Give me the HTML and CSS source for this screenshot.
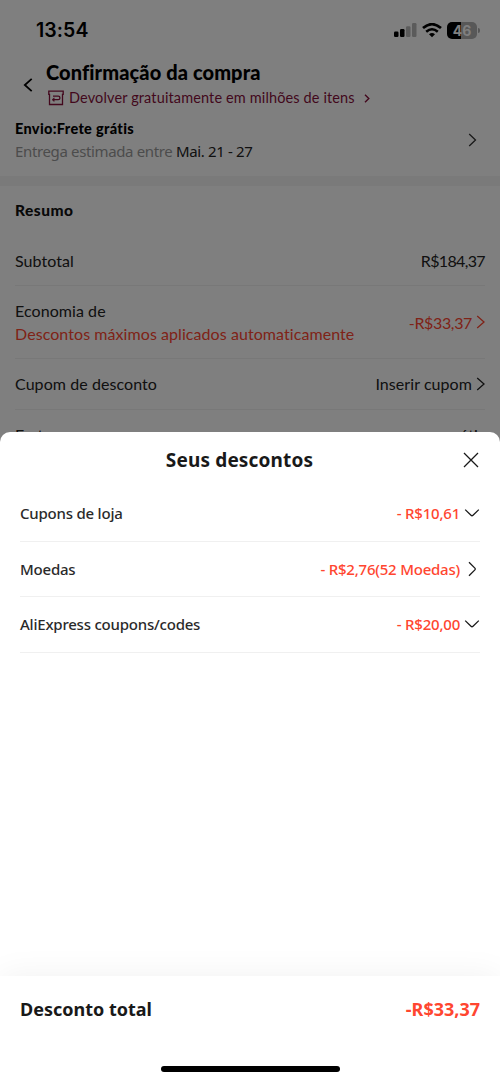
FILE: index.html
```html
<!DOCTYPE html>
<html lang="pt-BR">
<head>
<meta charset="utf-8">
<title>Confirmação da compra</title>
<link rel="stylesheet" href="styles.css">
</head>
<body>
<div class="screen">
  <div class="status">
    <span class="time">13:54</span>
    <div class="indicators">
      <svg class="signal" width="24" height="14" viewBox="0 0 24 14"><rect x="0" y="8.5" width="4.5" height="5.5" rx="1.2"/><rect x="6" y="6" width="4.5" height="8" rx="1.2"/><g opacity=".28"><rect x="12" y="3.2" width="4.5" height="10.8" rx="1.2"/><rect x="18" y="0" width="4.5" height="14" rx="1.2"/></g></svg>
      <svg class="wifi" width="20" height="15" viewBox="0 0 20 15"><path d="M1 5.1Q10-2.7 19 5.1" fill="none" stroke="#000" stroke-width="2.7"/><path d="M4.2 8.7Q10 3.8 15.8 8.7" fill="none" stroke="#000" stroke-width="2.6"/><path d="M10 14.2 7 11.2Q10 8.9 13 11.2Z"/></svg>
      <div class="battery">46</div><i class="nub"></i>
    </div>
  </div>
  <header class="header">
    <svg class="back" width="10" height="16" viewBox="0 0 10 16" fill="none" stroke="#000" stroke-width="1.8"><path d="M8.7 1.8 1.8 8l6.9 6.2"/></svg>
    <div>
      <h1 class="title">Confirmação da compra</h1>
      <div class="returns">
        <svg width="16" height="16" viewBox="0 0 16 16" fill="none" stroke="currentColor" stroke-width="1.3"><path d="M.8 1.2h14.4v3.2h-.7v10.1h-13V4.4H.8Z"/><path d="M5 6.2h5.2a1.7 1.7 0 0 1 0 3.5H5"/><path d="M6.2 7.8 4 9.7l2.2 1.8Z" fill="currentColor" stroke-width=".5"/></svg>
        <span class="returns-text">Devolver gratuitamente em milhões de itens</span>
        <svg class="mini" width="6" height="9" viewBox="0 0 6 9" fill="none" stroke="currentColor" stroke-width="1.4"><path d="M1 .8 4.8 4.5 1 8.2"/></svg>
      </div>
    </div>
  </header>
  <section class="shipping">
    <div>
      <div class="ship-method">Envio:Frete grátis</div>
      <div class="eta">Entrega estimada entre <span class="dates">Mai. 21 - 27</span></div>
    </div>
    <svg class="ship-arrow" width="9" height="14" viewBox="0 0 9 14" fill="none" stroke="#333" stroke-width="1.3"><path d="M1.2 1 7.5 7l-6.3 6"/></svg>
  </section>
  <section class="summary">
    <h2 class="summary-title">Resumo</h2>
    <div class="line subtotal"><span>Subtotal</span><span class="price">R$184,37</span></div>
    <div class="line savings"><div><div>Economia de</div><div class="red">Descontos máximos aplicados automaticamente</div></div>
      <span class="value red"><span class="price-off">-R$33,37</span><svg width="9" height="14" viewBox="0 0 9 14" fill="none" stroke="currentColor" stroke-width="1.3"><path d="M1.2 1 8 7l-6.8 6"/></svg></span></div>
    <div class="line coupon"><span>Cupom de desconto</span>
      <span class="value"><span>Inserir cupom</span><svg width="9" height="14" viewBox="0 0 9 14" fill="none" stroke="currentColor" stroke-width="1.3"><path d="M1.2 1 8 7l-6.8 6"/></svg></span></div>
    <div class="line freight"><span>Frete</span><span>grátis</span></div>
  </section>
  <div class="backdrop"></div>
  <div class="sheet">
    <div class="sheet-head">
      <h2 class="sheet-title">Seus descontos</h2>
      <svg class="close" width="16" height="16" viewBox="0 0 16 16" fill="none" stroke="#191919" stroke-width="1.3"><path d="m1 1 14 14M15 1 1 15"/></svg>
    </div>
    <div class="discounts">
      <div class="discount"><span>Cupons de loja</span><span class="amount">- R$10,61<svg class="chev" width="16" height="14" viewBox="0 0 16 14" fill="none" stroke="#191919" stroke-width="1.3"><path d="M1.2 3.6 7 9.2q1 1 2 0l5.8-5.6"/></svg></span></div>
      <div class="discount"><span>Moedas</span><span class="amount">- R$2,76(52 Moedas)<svg class="chev" width="16" height="16" viewBox="0 0 16 16" fill="none" stroke="#191919" stroke-width="1.3"><path d="m5 1.2 5.9 5.9q.9.9 0 1.8L5 14.8"/></svg></span></div>
      <div class="discount"><span>AliExpress coupons/codes</span><span class="amount">- R$20,00<svg class="chev" width="16" height="14" viewBox="0 0 16 14" fill="none" stroke="#191919" stroke-width="1.3"><path d="M1.2 3.6 7 9.2q1 1 2 0l5.8-5.6"/></svg></span></div>
    </div>
    <footer class="total">
      <div class="total-row"><span>Desconto total</span><span class="total-value">-R$33,37</span></div>
      <div class="home"></div>
    </footer>
  </div>
</div>
</body>
</html>
```
FILE: styles.css
```css
* { box-sizing: border-box; }
body { margin: 0; }
h1, h2 { margin: 0; }
svg { display: block; flex: none; }
.screen { position: relative; width: 500px; height: 1082px; overflow: hidden; background: #fff; color: #222; font: 16px/22px Lato, sans-serif; font-variant-ligatures: none; letter-spacing: .07px; white-space: nowrap; }
.status { display: flex; justify-content: space-between; height: 60px; padding: 19px 20px 0 36px; color: #000; }
.time { font: 600 19.5px/22px Inter, sans-serif; }
.indicators { display: flex; height: 22px; align-items: center; }
.wifi { margin-left: 4px; }
.battery { width: 30px; height: 17px; margin-left: 5px; border-radius: 5px; background: linear-gradient(90deg, #000 47%, #b0b0b0 47%); color: #fff; font: 700 14px/17px Inter, sans-serif; text-align: center; }
.nub { width: 2px; height: 5px; margin-left: 1px; border-radius: 0 2px 2px 0; background: #aaa; }
.header { display: flex; height: 57px; padding-left: 23px; }
.back { margin: 17px 13px 0 0; }
.title { height: 26px; font-size: 20px; font-weight: 900; line-height: 24px; letter-spacing: .1px; color: #000; }
.returns { display: flex; align-items: center; height: 24px; margin-left: 2px; color: #86103b; font-size: 14.5px; }
.returns-text { margin-left: 5px; letter-spacing: .13px; }
.mini { margin-left: 9px; }
.shipping { display: flex; justify-content: space-between; height: 69px; padding: 1px 23px 0 15px; border-bottom: 10px solid #f4f4f4; }
.ship-method { font-size: 14.5px; font-weight: 900; letter-spacing: .32px; color: #000; }
.eta { font: 15px/22px "Noto Sans", sans-serif; letter-spacing: -.36px; color: #999; }
.dates { color: #222; }
.ship-arrow { margin-top: 15px; }
.summary { padding: 0 15px; }
.summary-title { height: 50px; padding-top: 13px; color: #111; font-size: 15.5px; line-height: 22px; font-weight: 900; letter-spacing: .5px; }
.line { display: flex; align-items: center; justify-content: space-between; border-bottom: 1px solid #f0f0f0; }
.price { letter-spacing: -.65px; }
.price-off { letter-spacing: -.35px; }
.subtotal { height: 50px; }
.savings { height: 73px; line-height: 23px; }
.coupon { height: 51px; }
.freight { height: 51px; }
.value { display: flex; align-items: center; gap: 4px; }
.red { color: #ff4630; }
.backdrop { position: absolute; inset: 0; background: rgba(0, 0, 0, .5); }
.sheet { position: absolute; left: 0; right: 0; top: 432px; bottom: 0; display: flex; flex-direction: column; border-radius: 10px 10px 0 0; background: #fff; color: #191919; font-family: "Noto Sans", sans-serif; letter-spacing: 0; }
.sheet-head { display: grid; grid-template-columns: 1fr auto 1fr; align-items: center; height: 54px; padding: 2px 21px 0 0; }
.sheet-title { grid-column: 2; font-size: 19px; line-height: 26px; font-weight: 700; letter-spacing: .15px; }
.close { justify-self: end; }
.discounts { padding: 0 20px; }
.discount { display: flex; align-items: center; justify-content: space-between; height: 55.5px; border-bottom: 1px solid #f0f0f0; color: #2a2a2a; font-size: 15px; font-weight: 500; letter-spacing: -.22px; }
.amount { display: flex; align-items: center; gap: 4px; color: #ff4630; }
.total { height: 106px; margin-top: auto; background: #fff; box-shadow: 0 0 32px rgba(0, 0, 0, .06); }
.total-row { display: flex; justify-content: space-between; padding: 20px 20px 0; font-size: 18px; line-height: 26px; font-weight: 700; }
.total-value { color: #ff4630; }
.home { width: 179px; height: 6px; margin: 44px auto 0; border-radius: 3px; background: #000; }
```
